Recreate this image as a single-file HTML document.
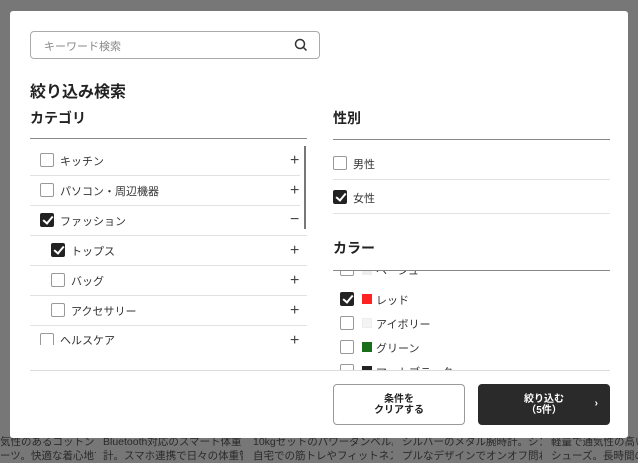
<!DOCTYPE html>
<html><head><meta charset="utf-8"><style>
*{margin:0;padding:0;box-sizing:border-box}
body{width:638px;height:462px;overflow:hidden;background:#777;font-family:"Liberation Sans","Noto Sans CJK JP",sans-serif;position:relative;color:#222}
.abs{position:absolute}
.bg{color:#2a2a2a;font-size:10.5px;white-space:nowrap;overflow:hidden;width:140px}
.modal{position:absolute;left:10px;top:11px;width:618px;height:427px;background:#fff;border-radius:3px}
.search{left:20px;top:20px;width:290px;height:28px;border:1px solid #aaa;border-radius:4px}
.search span{position:absolute;left:13px;top:6px;font-size:11px;color:#888}
h1{position:absolute;left:20px;top:67px;font-size:16px;font-weight:bold;color:#222}
h2{position:absolute;font-size:14px;font-weight:bold;color:#222}
.hl{position:absolute;height:1px;background:#888}
.sep{position:absolute;height:1px;background:#e2e2e2}
.cb{position:absolute;width:14px;height:14px;border:1px solid #999;border-radius:2px;background:#fff}
.cb.on{background:#222;border-color:#222}
.cb.on::after{content:"";position:absolute;left:4px;top:0px;width:4px;height:8px;border:solid #fff;border-width:0 2px 2px 0;transform:rotate(40deg)}
.t{position:absolute;font-size:11px;color:#333;white-space:nowrap}
.pm{position:absolute;font-size:16px;color:#444;line-height:16px}
.sw{position:absolute;width:10px;height:10px}
.btn{position:absolute;top:373px;width:132px;height:41px;border-radius:4px;font-size:10px;font-weight:bold;text-align:center;line-height:11px;display:flex;align-items:center;justify-content:center}
</style></head><body>
<div class="abs bg" style="left:0;top:434px;width:96px">気性のあるコットン</div>
<div class="abs bg" style="left:0;top:448px;width:96px">ーツ。快適な着心地で</div>
<div class="abs bg" style="left:103px;top:434px">Bluetooth対応のスマート体重</div>
<div class="abs bg" style="left:103px;top:448px">計。スマホ連携で日々の体重管</div>
<div class="abs bg" style="left:253px;top:434px">10kgセットのパワーダンベル。</div>
<div class="abs bg" style="left:253px;top:448px">自宅での筋トレやフィットネス</div>
<div class="abs bg" style="left:402px;top:434px">シルバーのメタル腕時計。シン</div>
<div class="abs bg" style="left:402px;top:448px">プルなデザインでオンオフ問わ</div>
<div class="abs bg" style="left:551px;top:434px;width:87px">軽量で通気性の高いラ</div>
<div class="abs bg" style="left:551px;top:448px;width:87px">シューズ。長時間のラ</div>
<div class="modal">
 <div class="abs search"><span>キーワード検索</span>
  <svg class="abs" style="left:263px;top:6px" width="14" height="14" viewBox="0 0 14 14"><circle cx="6" cy="6" r="4.5" fill="none" stroke="#333" stroke-width="1.5"/><path d="M9.2 9.2L12.5 12.5" stroke="#333" stroke-width="1.5"/></svg>
 </div>
 <h1>絞り込み検索</h1>
 <h2 style="left:20px;top:97px">カテゴリ</h2>
 <div class="hl" style="left:20px;top:127px;width:277px"></div>
 <div class="abs" style="left:294px;top:135px;width:2px;height:83px;background:#777"></div>

 <div class="cb" style="left:30px;top:142px"></div><div class="t" style="left:50px;top:142px">キッチン</div><div class="pm" style="left:280px;top:142px">+</div>
 <div class="sep" style="left:20px;top:164px;width:270px"></div>
 <div class="cb" style="left:30px;top:172px"></div><div class="t" style="left:50px;top:172px">パソコン・周辺機器</div><div class="pm" style="left:280px;top:172px">+</div>
 <div class="sep" style="left:20px;top:194px;width:270px"></div>
 <div class="cb on" style="left:30px;top:202px"></div><div class="t" style="left:50px;top:202px">ファッション</div><div class="pm" style="left:280px;top:201px">−</div>
 <div class="sep" style="left:20px;top:224px;width:277px"></div>
 <div class="cb on" style="left:41px;top:232px"></div><div class="t" style="left:61px;top:232px">トップス</div><div class="pm" style="left:280px;top:232px">+</div>
 <div class="sep" style="left:20px;top:254px;width:277px"></div>
 <div class="cb" style="left:41px;top:262px"></div><div class="t" style="left:61px;top:262px">バッグ</div><div class="pm" style="left:280px;top:262px">+</div>
 <div class="sep" style="left:20px;top:284px;width:277px"></div>
 <div class="cb" style="left:41px;top:292px"></div><div class="t" style="left:61px;top:292px">アクセサリー</div><div class="pm" style="left:280px;top:292px">+</div>
 <div class="sep" style="left:20px;top:314px;width:277px"></div>
 <div class="abs" style="left:0;top:318px;width:300px;height:16px;overflow:hidden">
  <div class="cb" style="left:30px;top:4px"></div><div class="t" style="left:50px;top:3px">ヘルスケア</div>
 </div>
 <div class="pm" style="left:280px;top:322px">+</div>

 <h2 style="left:323px;top:97px">性別</h2>
 <div class="hl" style="left:323px;top:128px;width:277px"></div>
 <div class="cb" style="left:323px;top:145px"></div><div class="t" style="left:343px;top:145px">男性</div>
 <div class="sep" style="left:323px;top:168px;width:277px"></div>
 <div class="cb on" style="left:323px;top:179px"></div><div class="t" style="left:343px;top:179px">女性</div>
 <div class="sep" style="left:323px;top:202px;width:277px"></div>

 <h2 style="left:323px;top:227px">カラー</h2>
 <div class="hl" style="left:323px;top:259px;width:277px"></div>
 <div class="abs" style="left:323px;top:260px;width:277px;height:99px;overflow:hidden">
  <div class="cb" style="left:7px;top:-9px"></div><div class="sw" style="left:29px;top:-6px;background:#eee"></div><div class="t" style="left:43px;top:-9px">ベージュ</div>
  <div class="cb on" style="left:7px;top:21px"></div><div class="sw" style="left:29px;top:23px;background:#f22"></div><div class="t" style="left:43px;top:21px">レッド</div>
  <div class="cb" style="left:7px;top:45px"></div><div class="sw" style="left:29px;top:47px;background:#f4f4f4;border:1px solid #eee"></div><div class="t" style="left:43px;top:45px">アイボリー</div>
  <div class="cb" style="left:7px;top:69px"></div><div class="sw" style="left:29px;top:71px;background:#1a6e1a"></div><div class="t" style="left:43px;top:69px">グリーン</div>
  <div class="cb" style="left:7px;top:93px"></div><div class="sw" style="left:29px;top:95px;background:#222"></div><div class="t" style="left:43px;top:93px">マットブラック</div>
 </div>
 <div class="sep" style="left:20px;top:359px;width:580px;background:#ddd"></div>
 <div class="btn" style="left:323px;border:1px solid #999;background:#fff;color:#222">条件を<br>クリアする</div>
 <div class="btn" style="left:468px;background:#2a2a2a;color:#fff">絞り込む<br>（5件）<span style="position:absolute;right:12px;top:14px;font-size:10px">›</span></div>
</div>
</body></html>
